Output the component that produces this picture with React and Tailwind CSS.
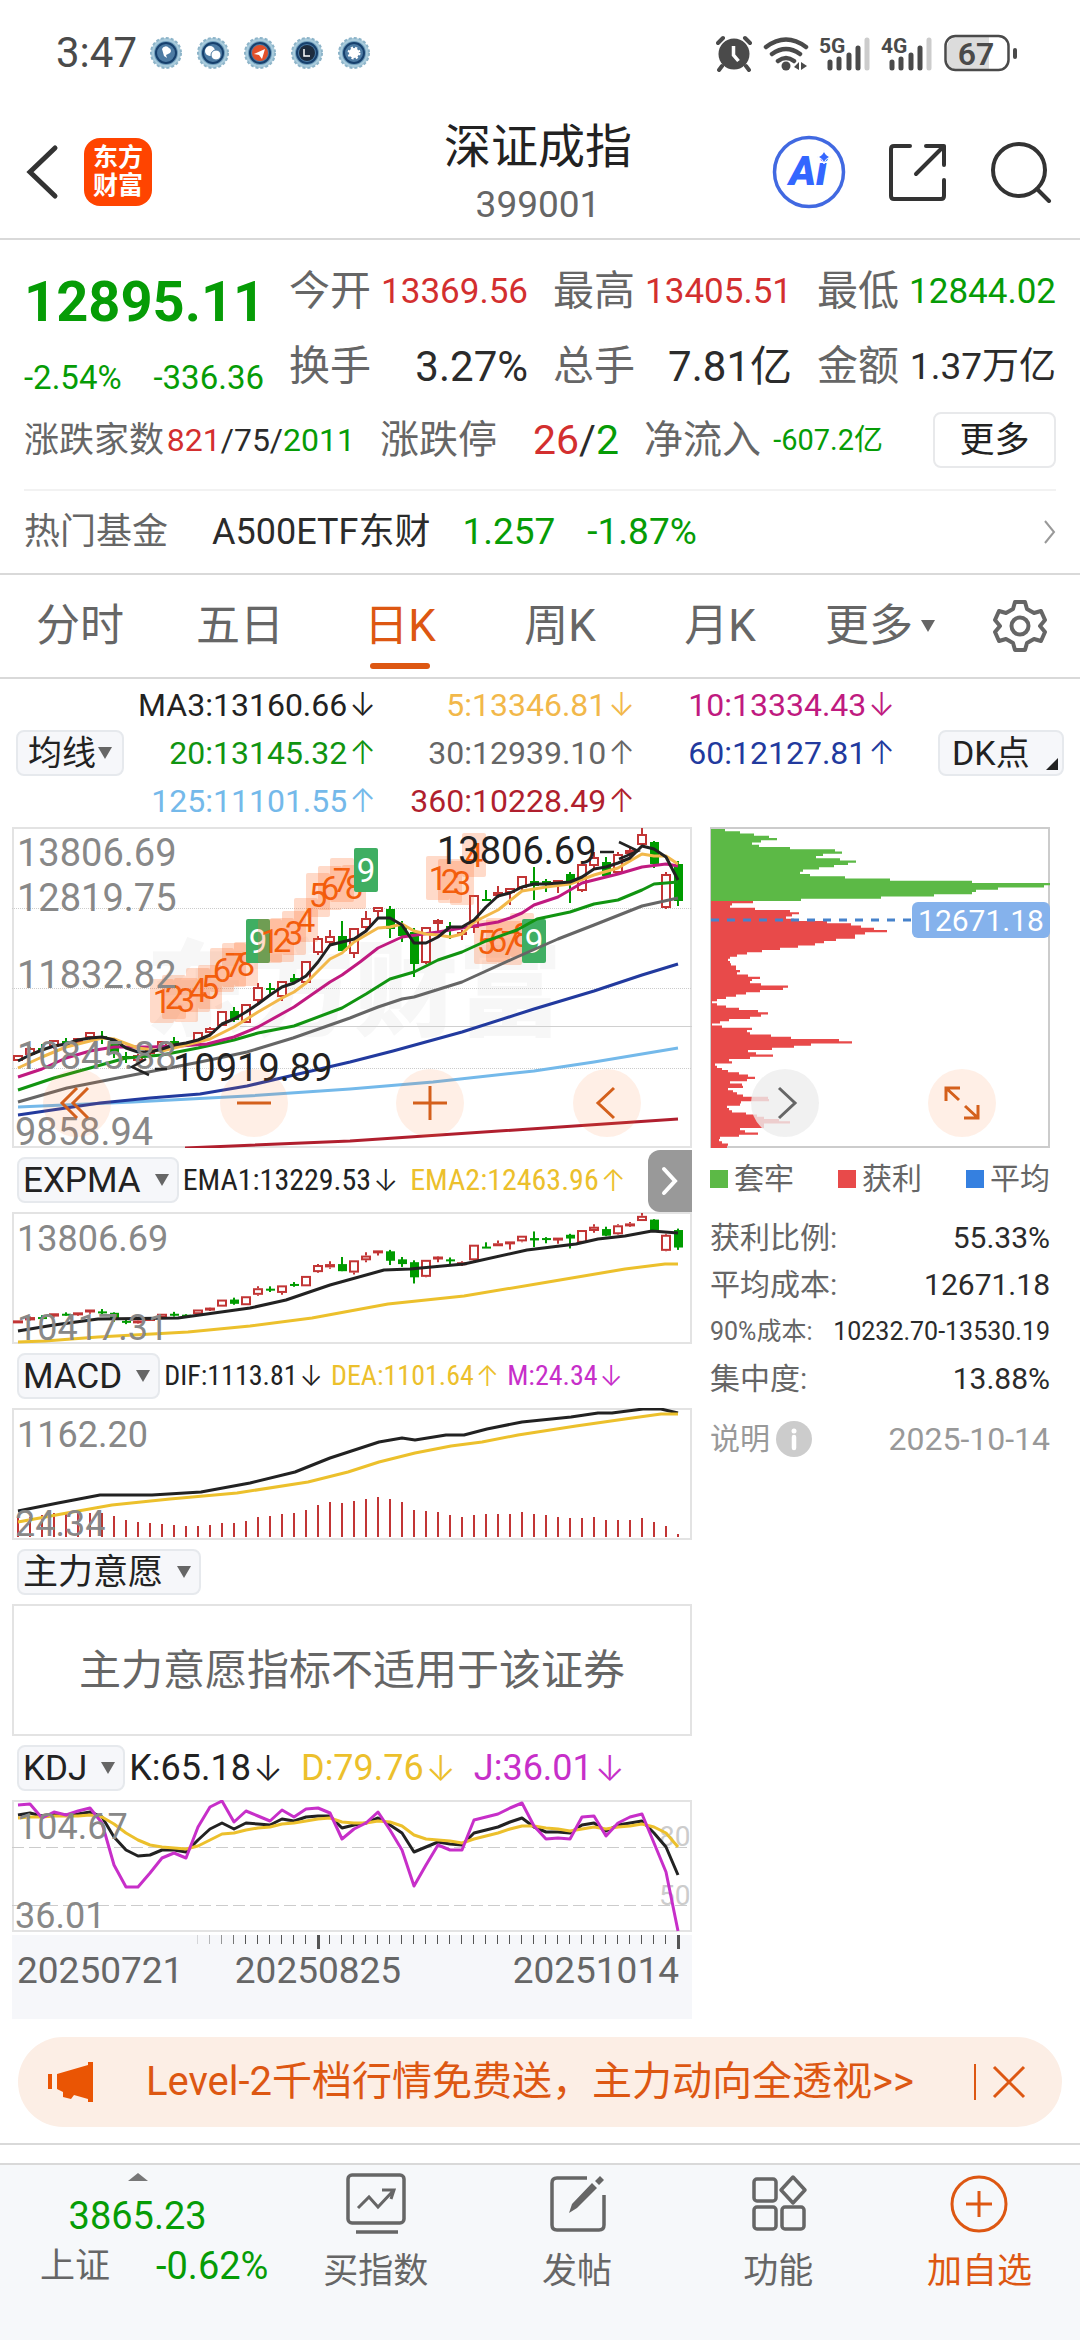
import React, { useState } from "react";

// [top, bottom, high, low, isUp] for each trading day
const candles = [
  [1055, 1061, 1055, 1061, 1], [1048, 1055, 1047, 1056, 1], [1048, 1050, 1044, 1053, 0], [1040, 1047, 1040, 1049, 1],
  [1041, 1043, 1038, 1045, 0], [1038, 1043, 1038, 1045, 1], [1032, 1038, 1032, 1041, 1], [1036, 1038, 1031, 1044, 0],
  [1039, 1053, 1038, 1058, 0], [1056, 1058, 1052, 1063, 0], [1055, 1061, 1054, 1062, 1], [1050, 1054, 1049, 1055, 1],
  [1041, 1050, 1041, 1051, 1], [1041, 1044, 1037, 1047, 0], [1043, 1045, 1042, 1046, 0], [1032, 1042, 1032, 1043, 1],
  [1028, 1033, 1027, 1035, 1], [1011, 1026, 1011, 1026, 1], [1011, 1020, 1007, 1022, 0], [1004, 1023, 1004, 1023, 1],
  [987, 1001, 983, 1003, 1], [988, 990, 983, 995, 0], [981, 997, 981, 1001, 1], [978, 982, 974, 984, 0],
  [961, 983, 961, 983, 1], [938, 953, 936, 955, 1], [936, 943, 930, 946, 1], [936, 951, 921, 951, 0],
  [928, 954, 928, 958, 1], [918, 928, 911, 932, 1], [907, 912, 907, 918, 1], [909, 929, 906, 938, 0],
  [926, 936, 921, 942, 0], [932, 964, 928, 977, 0], [927, 963, 927, 964, 1], [920, 924, 919, 932, 1],
  [926, 928, 922, 939, 0], [932, 935, 930, 940, 1], [895, 928, 895, 933, 1], [899, 900, 890, 901, 0],
  [892, 896, 886, 898, 1], [888, 893, 888, 905, 1], [876, 888, 876, 890, 1], [881, 886, 867, 900, 0],
  [881, 883, 879, 892, 0], [880, 883, 880, 893, 1], [874, 882, 872, 903, 0], [864, 891, 864, 892, 1],
  [857, 866, 852, 870, 1], [862, 876, 857, 877, 0], [854, 873, 852, 874, 1], [850, 854, 847, 857, 1],
  [834, 845, 828, 845, 1], [842, 864, 841, 868, 0], [874, 908, 872, 909, 1], [864, 901, 861, 906, 0],
];

const ma3 = [
  1061, 1055, 1050, 1046, 1044, 1040, 1038, 1037, 1040, 1048, 1052, 1052, 1049, 1045, 1043, 1040, 1035, 1024, 1019,
  1012, 1004, 995, 987, 983, 976, 962, 945, 942, 939, 931, 918, 918, 925, 943, 943, 937, 927, 927, 920, 907, 896, 893,
  887, 884, 884, 883, 882, 877, 869, 867, 863, 858, 846, 849, 857, 880,
];

const maLines = [
  ["#b01f2e", "185,1148 350,1141 678,1119"],
  ["#74b9ea", "18,1107 133,1102 247,1096 350,1089 433,1082 534,1071 594,1062 678,1048"],
  ["#223a9e", "18,1115 100,1103 150,1098 200,1094 247,1086 294,1075 350,1062 393,1051 462,1032 534,1009 594,991 642,975 678,964"],
  ["#666666", "18,1102 67,1088 133,1075 200,1062 247,1052 293,1038 350,1018 378,1007 402,999 414,997 462,982 517,957 558,939 594,925 642,906 678,898"],
  ["#119411", "18,1090 54,1078 90,1068 126,1058 162,1055 198,1048 234,1040 258,1033 294,1026 342,1008 366,994 390,979 414,972 438,960 462,952 486,941 517,930 537,919 570,912 594,904 618,900 642,890 654,884 678,882"],
  ["#c01a80", "18,1077 42,1069 66,1058 90,1051 114,1047 150,1047 180,1046 207,1044 234,1037 258,1027 294,1007 330,982 342,975 360,962 378,948 402,937 438,932 474,926 498,922 510,918 522,913 534,905 558,897 582,883 618,874 642,867 666,864 678,866"],
  ["#f2b84a", "18,1068 42,1057 66,1047 102,1038 114,1039 138,1048 162,1051 186,1045 210,1039 234,1027 258,1012 282,998 294,992 306,983 330,959 342,953 354,942 378,928 390,927 402,924 414,931 426,934 438,935 450,937 462,934 474,922 498,910 522,891 546,887 570,884 594,875 618,868 642,854 654,856 666,856 678,864"],
];

// nine-turn counters: [day index, digit, centre y]
const turns = [
  [12, 1, 1001], [13, 2, 997], [14, 3, 1000], [15, 4, 990], [16, 5, 987], [17, 6, 970], [18, 7, 965], [19, 8, 964],
  [20, 9, 941], [21, 1, 941], [22, 2, 940], [23, 3, 933], [24, 4, 920], [25, 5, 895], [26, 6, 888], [27, 7, 880],
  [28, 8, 887], [29, 9, 870], [35, 1, 878], [36, 2, 881], [37, 3, 883], [38, 4, 855], [39, 5, 942], [40, 6, 940],
  [41, 7, 943], [42, 8, 935], [43, 9, 941],
];

const trapped = [
  14, 29, 43, 58, 66, 50, 41, 48, 79, 124, 131, 112, 105, 129, 145, 137, 123, 108, 92, 89, 99, 134, 179, 261, 339, 333,
  287, 265, 261, 223, 170, 90,
];
const profit = [
  42, 21, 19, 44, 79, 88, 81, 75, 83, 116, 140, 150, 163, 176, 154, 144, 144, 125, 113, 104, 87, 69, 51, 36, 26, 19, 17,
  19, 20, 25, 25, 29, 26, 37, 49, 41, 39, 50, 77, 72, 49, 35, 25, 15, 6, 1, 6, 15, 28, 47, 57, 50, 39, 18, 9, 1, 11, 41,
  36, 39, 60, 80, 128, 141, 100, 83, 61, 37, 45, 62, 39, 18, 21, 4, 6, 11, 17, 28, 37, 44, 36, 19, 31, 32, 17, 22, 26,
  32, 57, 58, 30, 29, 16, 18, 21, 35, 46, 53, 68, 79, 53, 53, 29, 34, 47, 28, 9, 8, 11, 17, 16,
];

const macdBars = [
  19, 20, 22, 24, 24, 25, 24, 24, 21, 17, 15, 14, 13, 12, 11, 11, 12, 14, 14, 16, 20, 21, 23, 24, 27, 32, 35, 34, 36, 38,
  40, 38, 35, 27, 26, 25, 22, 20, 22, 23, 23, 23, 25, 23, 22, 20, 19, 19, 20, 17, 17, 17, 19, 15, 11, 3,
];

const kLine = [
  15, 13, 16, 14, 15, 14, 12, 17, 37, 50, 56, 55, 50, 50, 52, 40, 29, 23, 29, 23, 24, 25, 19, 21, 17, 16, 16, 28, 25, 23,
  18, 25, 33, 52, 47, 42, 44, 45, 33, 30, 27, 22, 18, 27, 32, 32, 33, 25, 23, 31, 25, 23, 21, 33, 47, 75,
];
const dLine = [
  18, 17, 17, 16, 16, 16, 15, 17, 24, 33, 40, 45, 47, 48, 49, 46, 40, 34, 33, 30, 28, 27, 24, 23, 21, 19, 18, 22, 23, 23,
  21, 22, 26, 35, 39, 40, 41, 43, 39, 36, 33, 29, 26, 26, 28, 29, 31, 29, 27, 29, 27, 26, 24, 27, 33, 47,
];
const jLine = [
  5, 4, 18, 12, 15, 11, 8, 23, 65, 87, 87, 73, 58, 53, 58, 27, 7, 1, 22, 11, 16, 21, 10, 17, 9, 8, 13, 39, 29, 23, 12,
  30, 50, 86, 65, 45, 50, 50, 20, 17, 14, 8, 3, 26, 39, 38, 39, 17, 16, 36, 23, 17, 14, 43, 72, 131,
];

const dayX = (i) => 18 + i * 12;
const toPoints = (ys) => ys.map((y, i) => `${dayX(i)},${y}`).join(" ");

const stepPath = (rows, left, top, height) => {
  const h = height / rows.length;
  const steps = rows.map((w, i) => `L${left + w} ${top + i * h}L${left + w} ${top + (i + 1) * h}`).join("");
  return `M${left} ${top}${steps}L${left} ${top + height}Z`;
};

const Line = ({ points, color }) => (
  <polyline points={points} fill="none" stroke={color} strokeWidth="3" strokeLinejoin="round" />
);

const Candles = ({ y = (v) => v }) =>
  candles.map(([top, bottom, high, low, up], i) => {
    const x = dayX(i);
    const h = Math.max(y(bottom) - y(top), 2);
    return up ? (
      <g key={i} stroke="#c23535" strokeWidth="2">
        <path d={`M${x} ${y(high)}V${y(top)}M${x} ${y(bottom)}V${y(low)}`} />
        <rect x={x - 4} y={y(top) + 1} width="8" height={Math.max(h - 2, 1)} fill="#fff" />
      </g>
    ) : (
      <g key={i} fill="#009b00">
        <rect x={x - 1} y={y(high)} width="2" height={y(low) - y(high)} />
        <rect x={x - 4} y={y(top)} width="9" height={h} />
      </g>
    );
  });

const Caret = () => (
  <svg viewBox="0 0 14 12" className="w-[14px] h-3 shrink-0">
    <path d="M0 0h14L7 12z" fill="#666" />
  </svg>
);

const Arrow = ({ up }) => <span className="font-['Inter',sans-serif] font-light">{up ? "↑" : "↓"}</span>;

const StatusBar = () => (
  <div className="flex items-center justify-between h-[106px] pl-14 pr-[62px] text-[#4a4a4a]">
    <div className="flex items-center gap-3">
      <span className="text-[42px] leading-none">3:47</span>
      <svg viewBox="0 0 222 34" className="w-[222px] h-[34px]">
        {[17, 64, 111, 158, 205].map((cx, i) => (
          <g key={cx}>
            <circle cx={cx} cy="17" r="15" fill="#a9cbdc" stroke="#8db4c9" strokeWidth="2" strokeDasharray="3 2" />
            <circle cx={cx} cy="17" r="12" fill="#6f9dbb" />
            <circle cx={cx} cy="17" r="10" fill="#4d7ba3" stroke="#17406d" strokeWidth="2" />
            {i === 0 && <path d="M13 13a4 4 0 0 1 7-1 3 3 0 0 1 1 5l-4 2 1 3-3-2z" fill="#fff" />}
            {i === 1 && (
              <g fill="#fff">
                <circle cx="61" cy="15" r="5" />
                <circle cx="67" cy="19" r="5" stroke="#4d7ba3" />
              </g>
            )}
            {i === 2 && (
              <g>
                <circle cx="111" cy="17" r="8" fill="#e2502a" />
                <path d="M105 18l11-5-3 10-3-4z" fill="#fff" />
              </g>
            )}
            {i === 3 && (
              <g>
                <circle cx="158" cy="17" r="8" fill="#1e2c3e" />
                <path d="M155 13v7h6" fill="none" stroke="#fff" strokeWidth="1.5" />
              </g>
            )}
            {i === 4 && <circle cx="205" cy="17" r="5" fill="#fff" stroke="#fff" strokeWidth="3" strokeDasharray="2 2" />}
          </g>
        ))}
      </svg>
    </div>
    <svg viewBox="717 34 302 38" className="w-[302px] h-[38px]" fill="#4a4a4a">
      <circle cx="735" cy="54" r="15.5" />
      <path d="M719 43l5-5M751 43l-5-5M723 66l-3 4M747 66l3 4" stroke="#4a4a4a" strokeWidth="4" strokeLinecap="round" />
      <path d="M734.500 46v9l5 6" fill="none" stroke="#fff" strokeWidth="3.500" />
      <g fill="none" stroke="#4a4a4a" strokeWidth="4.500" strokeLinecap="round">
        <path d="M767 47q20-15 40 0M773 54q14-10 28 0M779 61q8-6 16 0" />
      </g>
      <circle cx="787" cy="66" r="4.500" />
      <path d="M795 67l5-5v8zM802 62l6 4-6 4z" />
      {[0, 62].map((dx) => (
        <g key={dx} strokeWidth="5" strokeLinecap="round" stroke="#4a4a4a">
          <path d={`M${831 + dx} 62v6M${840 + dx} 59v9M${850 + dx} 55v13M${859 + dx} 48v20`} />
          <path d={`M${868 + dx} 40v28`} stroke="#ccc" />
        </g>
      ))}
      <text x="820" y="53" fontSize="21" fontWeight="700">5G</text>
      <text x="882" y="53" fontSize="21" fontWeight="700">4G</text>
      <path d="M958 37h32v33h-32a10 10 0 0 1-10-10V47a10 10 0 0 1 10-10z" fill="#dcdcdc" />
      <rect x="946.500" y="36" width="63" height="34" rx="10" fill="none" stroke="#4a4a4a" strokeWidth="2.500" />
      <rect x="1014" y="48" width="4" height="11" rx="2" />
      <text x="977" y="65" fontSize="32" fontWeight="600" textAnchor="middle">67</text>
    </svg>
  </div>
);

const Header = () => (
  <header className="flex items-center h-[134px] border-b-2 border-[#d9d9d9] pl-6 pr-7">
    <div className="flex-1 flex items-center gap-6">
      <button aria-label="返回">
        <svg viewBox="0 0 36 56" className="w-9 h-14" fill="none" stroke="#333" strokeWidth="5" strokeLinecap="round">
          <path d="M31 4L6 28l25 24" />
        </svg>
      </button>
      <a
        href="#home"
        className="w-[68px] h-[68px] rounded-2xl bg-[#ff4400] text-white text-[25px] leading-7 font-bold flex flex-col items-center justify-center"
      >
        <span>东方</span>
        <span>财富</span>
      </a>
    </div>
    <div className="text-center pt-2">
      <h1 className="text-[47px] leading-[58px] text-[#222]">深证成指</h1>
      <p className="text-[37px] leading-[58px] text-[#666]">399001</p>
    </div>
    <div className="flex-1 flex items-center justify-end gap-[42px]">
      <button aria-label="Ai">
        <svg viewBox="0 0 74 74" className="w-[74px] h-[74px]">
          <circle cx="37" cy="37" r="34.500" fill="none" stroke="#4169e1" strokeWidth="3.500" />
          <g fill="#3366ff">
            <text x="36" y="50" fontSize="41" fontWeight="900" textAnchor="middle" fontStyle="italic">Ai</text>
            <path d="M52 15q1 6 7 7-6 1-7 7-1-6-7-7 6-1 7-7z" stroke="#fff" strokeWidth="1" />
          </g>
        </svg>
      </button>
      <button aria-label="分享">
        <svg viewBox="0 0 60 60" className="w-[60px] h-[60px]" fill="none" stroke="#333" strokeWidth="4" strokeLinecap="round" strokeLinejoin="round">
          <path d="M22 4H6q-3 0-3 3v47q0 3 3 3h47q3 0 3-3V38" />
          <path d="M38 4h18v19M56 4L28 32" />
        </svg>
      </button>
      <button aria-label="搜索">
        <svg viewBox="0 0 62 62" className="w-[62px] h-[62px]" fill="none" stroke="#333" strokeWidth="4" strokeLinecap="round">
          <circle cx="29" cy="29" r="26" />
          <path d="M47 48l12 12" />
        </svg>
      </button>
    </div>
  </header>
);

const Stat = ({ label, children }) => (
  <div className="flex items-center justify-between h-[75px]">
    <span className="text-[41px] text-[#666]">{label}</span>
    {children}
  </div>
);

const QuotePanel = () => (
  <section className="px-6 pt-3 border-b-2 border-[#d9d9d9] whitespace-nowrap leading-none">
    <div className="flex gap-[25px]">
      <div className="flex-[240] min-w-0 text-[#069c06]">
        <div className="h-[100px] flex items-center text-[56px] font-bold">12895.11</div>
        <div className="flex justify-between text-[33px] h-[50px] items-center">
          <span>-2.54%</span>
          <span>-336.36</span>
        </div>
      </div>
      <div className="flex-[767] min-w-0 grid grid-cols-3 gap-x-[25px] pt-0.5 text-[#2b2b2b]">
        <Stat label="今开"><span className="text-[35px] text-[#d32f2f]">13369.56</span></Stat>
        <Stat label="最高"><span className="text-[35px] text-[#d32f2f]">13405.51</span></Stat>
        <Stat label="最低"><span className="text-[35px] text-[#069c06]">12844.02</span></Stat>
        <Stat label="换手"><span className="text-[42px]">3.27%</span></Stat>
        <Stat label="总手"><span className="text-[42px]">7.81亿</span></Stat>
        <Stat label="金额"><span className="text-[37px]">1.37万亿</span></Stat>
      </div>
    </div>
    <div className="flex items-center gap-[25px] h-[72px]">
      <div className="flex-[331] min-w-0 flex items-center justify-between">
        <span className="text-[35px] text-[#666]">涨跌家数</span>
        <span className="text-[32px]">
          <span className="text-[#d32f2f]">821</span>/75/<span className="text-[#069c06]">2011</span>
        </span>
      </div>
      <div className="flex-[239] min-w-0 flex items-center justify-between">
        <span className="text-[39px] text-[#666]">涨跌停</span>
        <span className="text-[41px]">
          <span className="text-[#d32f2f]">26</span>/<span className="text-[#069c06]">2</span>
        </span>
      </div>
      <div className="flex-[239] min-w-0 flex items-center justify-between">
        <span className="text-[39px] text-[#666]">净流入</span>
        <span className="text-[29px] text-[#069c06]">-607.2亿</span>
      </div>
      <button className="ml-[25px] w-[123px] h-14 border-2 border-[#e8e9eb] rounded-lg text-[35px] text-[#222]">更多</button>
    </div>
    <a href="#fund" className="mt-[13px] flex items-center h-[84px] border-t-2 border-[#f2f2f2] text-4xl text-[#069c06]">
      <span className="text-[#666] mr-11">热门基金</span>
      <span className="text-[#2b2b2b] mr-8">A500ETF东财</span>
      <span className="mr-8 text-[37px]">1.257</span>
      <span className="text-[37px]">-1.87%</span>
      <svg viewBox="0 0 12 24" className="w-3 h-6 ml-auto" fill="none" stroke="#999" strokeWidth="2">
        <path d="M1 1l9 11-9 11" />
      </svg>
    </a>
  </section>
);

const tabs = ["分时", "五日", "日K", "周K", "月K", "更多"];

const Tabs = () => {
  const [active, setActive] = useState("日K");

  return (
    <nav className="flex items-center h-[104px] border-b-2 border-[#d9d9d9]">
      {tabs.map((tab) => (
        <button
          key={tab}
          onClick={() => setActive(tab)}
          className={
            "flex-[4] relative h-full flex items-center justify-center gap-2 text-[44px] " +
            (active === tab ? "text-[#dd5712]" : "text-[#666]")
          }
        >
          {tab}
          {tab === "更多" && <Caret />}
          {active === tab && <span className="absolute bottom-2 w-[60px] h-1.5 rounded bg-[#dd5712]"></span>}
        </button>
      ))}
      <button aria-label="设置" className="flex-[3] flex justify-center">
        <svg viewBox="0 0 54 54" className="w-[54px] h-[54px]" fill="none" stroke="#666" strokeWidth="4" strokeLinejoin="round">
          <path d="M22 3h10l2 7 7 4 7-2 4 9-5 6 5 6-4 9-7-2-7 4-2 7H22l-2-7-7-4-7 2-4-9 5-6-5-6 4-9 7 2 7-4z" />
          <circle cx="27" cy="27" r="8.500" />
        </svg>
      </button>
    </nav>
  );
};

const averages = [
  ["MA3:13160.66", false, "text-[#222]"],
  ["5:13346.81", false, "text-[#f2b84a]"],
  ["10:13334.43", false, "text-[#c01a80]"],
  ["20:13145.32", true, "text-[#119411]"],
  ["30:12939.10", true, "text-[#666]"],
  ["60:12127.81", true, "text-[#223a9e]"],
  ["125:11101.55", true, "text-[#74b9ea]"],
  ["360:10228.49", true, "text-[#b01f2e]"],
];

const Averages = () => (
  <section className="flex items-center px-4 py-0.5 whitespace-nowrap">
    <button className="w-[108px] h-[46px] flex items-center justify-center gap-0.5 rounded-lg border-2 border-[#e6e9ed] bg-[#f6f7fa] text-[34px] text-[#222]">
      均线
      <Caret />
    </button>
    <div className="flex-1 grid grid-cols-[250fr_257fr_258fr] pr-[43px]">
      {averages.map(([text, up, color]) => (
        <span key={text} className={"h-12 flex items-center justify-end gap-0.5 text-[32px] leading-none " + color}>
          {text}
          <Arrow up={up} />
        </span>
      ))}
    </div>
    <button className="w-[126px] h-[46px] relative flex items-center pl-3 rounded-lg border-2 border-[#e6e9ed] bg-[#f6f7fa] text-[34px] text-[#222]">
      DK点
      <svg viewBox="0 0 12 12" className="absolute right-1 bottom-1 w-3 h-3">
        <path d="M12 0v12H0z" fill="#222" />
      </svg>
    </button>
  </section>
);

const RoundButton = ({ label, gray, children }) => (
  <button
    aria-label={label}
    className={"w-[68px] h-[68px] rounded-full " + (gray ? "bg-[#eeeeee]/80" : "bg-[#ff7a33]/12")}
  >
    <svg
      viewBox="0 0 68 68"
      fill="none"
      stroke={gray ? "#666" : "#d4601c"}
      strokeWidth="3"
      className="w-[68px] h-[68px]"
    >
      {children}
    </svg>
  </button>
);

const MainChart = () => (
  <div className="relative">
    <svg viewBox="12 827 680 321" className="block w-full">
      <text x="146" y="1028" fontSize="104" fontWeight="900" fill="#f7f7f7">东方财富</text>
      <rect x="13" y="828" width="678" height="319" fill="none" stroke="#e3e3e3" strokeWidth="2" />
      <path d="M12 908.500H692M12 988.500H692M12 1068.500H692" stroke="#ccc" strokeDasharray="1 1" />
      <path d="M240 1026.500H692" stroke="#d0d0d0" />
      <Candles />
      {turns.map(([i, n, y]) => (
        <g key={i}>
          <rect x={dayX(i) - 12} y={y - 22} width="24" height="44" rx="2" fill={n === 9 ? "#3fae62" : "#ff6a26"} opacity={n === 9 ? 1 : 0.25} />
          <text x={dayX(i)} y={y + 12} fontSize="33" textAnchor="middle" fill={n === 9 ? "#fff" : "#f25c0a"}>{n}</text>
        </g>
      ))}
      {maLines.map(([color, points]) => (
        <Line key={color} points={points} color={color} />
      ))}
      <Line points={toPoints(ma3)} color="#222" />
      <g fontSize="38" fill="#888">
        <text x="17" y="866">13806.69</text>
        <text x="17" y="911">12819.75</text>
        <text x="17" y="988">11832.82</text>
        <text x="17" y="1069">10845.88</text>
        <text x="15" y="1145">9858.94</text>
      </g>
      <g fontSize="38" fill="#222">
        <text x="437" y="864">13806.69</text>
        <text x="173" y="1081">10919.89</text>
      </g>
      <path d="M600 852h14M619 842l19 9-19 8M146 1059l-14 8 17 8M155 1069h12" fill="none" stroke="#222" strokeWidth="2.500" />
    </svg>
    <div className="absolute bottom-[11px] inset-x-0 pl-[31px] pr-[51px] flex justify-between">
      <RoundButton label="最早">
        <path d="M34 19L19 34l15 15M45 19L30 34l15 15" />
      </RoundButton>
      <RoundButton label="缩小">
        <path d="M17 34h34" />
      </RoundButton>
      <RoundButton label="放大">
        <path d="M17 34h34M34 17v34" />
      </RoundButton>
      <RoundButton label="左移">
        <path d="M41 19L25 34l16 15" />
      </RoundButton>
    </div>
  </div>
);

const IndicatorRow = ({ name, values, className = "", children }) => (
  <div className="relative flex items-center h-16 pl-[5px] gap-1 whitespace-nowrap leading-none">
    <button className="h-[46px] pl-1 pr-2 flex items-center gap-3.5 rounded-lg border-2 border-[#e6e9ed] bg-[#f6f7fa] text-[35px] text-[#222]">
      {name}
      <Caret />
    </button>
    <div className={"flex " + className}>
      {values.map(([text, up, color]) => (
        <span key={text} className={"flex items-center gap-0.5 " + color}>
          {text}
          <Arrow up={up} />
        </span>
      ))}
    </div>
    {children}
  </div>
);

const narrow = "font-['Roboto_Condensed','Liberation_Sans_Narrow','Roboto',sans-serif]";

const Indicators = () => (
  <>
    <IndicatorRow
      name="EXPMA"
      className={narrow + " text-[30px] gap-3"}
      values={[
        ["EMA1:13229.53", false, "text-[#222]"],
        ["EMA2:12463.96", true, "text-[#ecc02c]"],
      ]}
    >
      <button aria-label="展开" className="absolute right-0 top-0.5 w-11 h-[62px] rounded-l-xl bg-[#999] flex items-center justify-center">
        <svg viewBox="0 0 18 30" className="w-[18px] h-[30px]" fill="none" stroke="#fff" strokeWidth="4" strokeLinecap="round">
          <path d="M3 3l11 12L3 27" />
        </svg>
      </button>
    </IndicatorRow>
    <svg viewBox="12 1212 680 132" className="block w-full">
      <rect x="13" y="1213" width="678" height="130" fill="none" stroke="#e3e3e3" strokeWidth="2" />
      <Candles y={(v) => 1213 + (v - 828) * 0.473} />
      <Line
        color="#222"
        points="18,1331 54,1325 98,1319 178,1318 214,1313 250,1308 286,1300 330,1285 384,1270 410,1269 464,1264 527,1250 576,1244 598,1239 625,1236 652,1231 678,1233"
      />
      <Line
        color="#ecc02c"
        points="18,1342 45,1341 98,1337 188,1332 250,1326 312,1318 388,1304 464,1296 554,1281 625,1269 665,1264 678,1264"
      />
      <g fontSize="36" fill="#888">
        <text x="17" y="1251">13806.69</text>
        <text x="17" y="1340">10417.31</text>
      </g>
    </svg>

    <IndicatorRow
      name="MACD"
      className={narrow + " text-[28px] gap-2"}
      values={[
        ["DIF:1113.81", false, "text-[#222]"],
        ["DEA:1101.64", true, "text-[#ecc02c]"],
        ["M:24.34", false, "text-[#c72fc9]"],
      ]}
    />
    <svg viewBox="12 1408 680 132" className="block w-full">
      <rect x="13" y="1409" width="678" height="130" fill="none" stroke="#e3e3e3" strokeWidth="2" />
      {macdBars.map((h, i) => (
        <rect key={i} x={dayX(i) - 1} y={1537 - h} width="2" height={h} fill="#c23535" />
      ))}
      <Line
        color="#222"
        points="18,1511 58,1503 100,1495 152,1495 201,1492 250,1483 295,1472 330,1458 379,1442 402,1438 415,1440 446,1435 464,1435 487,1429 522,1422 571,1417 598,1413 612,1413 643,1409 661,1409 678,1413"
      />
      <Line
        color="#ecc02c"
        points="18,1522 67,1513 112,1505 170,1499 237,1493 308,1482 348,1472 379,1462 415,1453 451,1446 482,1442 518,1435 576,1426 625,1419 661,1414 678,1414"
      />
      <g fontSize="36" fill="#888">
        <text x="17" y="1447">1162.20</text>
        <text x="15" y="1536">24.34</text>
      </g>
    </svg>

    <IndicatorRow name="主力意愿" values={[]} />
    <div className="h-[132px] border-2 border-[#e3e3e3] flex items-center justify-center text-[42px] text-[#666]">
      主力意愿指标不适用于该证券
    </div>

    <IndicatorRow
      name="KDJ"
      className="text-4xl gap-[18px]"
      values={[
        ["K:65.18", false, "text-[#222]"],
        ["D:79.76", false, "text-[#ecc02c]"],
        ["J:36.01", false, "text-[#c72fc9]"],
      ]}
    />
    <svg viewBox="12 0 680 132" className="block w-full">
      <rect x="13" y="1" width="678" height="130" fill="none" stroke="#e3e3e3" strokeWidth="2" />
      <path d="M12 47.500H692M12 105.500H692" stroke="#ccc" strokeDasharray="12 5" />
      <g fontSize="28" fill="#ccc">
        <text x="659" y="46">80</text>
        <text x="659" y="105">50</text>
      </g>
      <Line points={toPoints(kLine)} color="#222" />
      <Line points={toPoints(dLine)} color="#ecc02c" />
      <Line points={toPoints(jLine)} color="#c72fc9" />
      <g fontSize="36" fill="#888">
        <text x="17" y="39">104.67</text>
        <text x="15" y="128">36.01</text>
      </g>
    </svg>
    <svg viewBox="12 0 680 84" className="block w-full mt-[3px] bg-[#f6f7fa]">
      {candles.slice(15).map((_, n) => {
        const major = n === 10 || n === 40;
        return (
          <rect
            key={n}
            x={dayX(n + 15) - 1}
            y="0"
            width={major ? 3 : 1}
            height={major ? 14 : 9}
            fill="#555"
            opacity={Math.min(1, 0.2 + n * 0.2)}
          />
        );
      })}
      <g fontSize="37" fill="#666">
        <text x="17" y="48">20250721</text>
        <text x="318" y="48" textAnchor="middle">20250825</text>
        <text x="679" y="48" textAnchor="end">20251014</text>
      </g>
    </svg>
  </>
);

const Fact = ({ label, value, small }) => (
  <div className={"flex items-center justify-between h-[47px] " + (small ? "text-[25px]" : "text-[30px]")}>
    <dt className="text-[#666]">{label}:</dt>
    <dd className="text-[#2b2b2b]">{value}</dd>
  </div>
);

const ChipPanel = () => (
  <aside className="flex-[340] min-w-0 whitespace-nowrap leading-none">
    <div className="relative">
      <svg viewBox="710 827 340 321" className="block w-full">
        <rect x="711" y="828" width="338" height="319" fill="none" stroke="#ccc" strokeWidth="2" />
        <path d={stepPath(trapped, 711, 829, 72)} fill="#5cb946" />
        <path d={stepPath(profit, 711, 901, 247)} fill="#e84a4a" />
        <path d="M711 920H912" stroke="#4682cb" strokeWidth="3" strokeDasharray="8 8" />
        <rect x="912" y="902" width="138" height="36" rx="6" fill="#85b2ec" />
        <text x="981" y="931" fontSize="30" fill="#fff" textAnchor="middle">12671.18</text>
      </svg>
      <div className="absolute bottom-[11px] inset-x-0 pl-[41px] pr-[54px] flex justify-between">
        <RoundButton label="右移" gray>
          <path d="M28 19l16 15-16 15" />
        </RoundButton>
        <RoundButton label="全屏">
          <path d="M18 32V19h14M18 19l13 12M50 36v13H36M50 49L37 37" />
        </RoundButton>
      </div>
    </div>
    <div className="flex justify-between h-[66px] pb-1 items-center text-[30px] text-[#666]">
      <span className="flex items-center gap-1.5"><i className="w-[18px] h-[18px] bg-[#5cb946]"></i>套牢</span>
      <span className="flex items-center gap-1.5"><i className="w-[18px] h-[18px] bg-[#e84a4a]"></i>获利</span>
      <span className="flex items-center gap-1.5"><i className="w-[18px] h-[18px] bg-[#3580e0]"></i>平均</span>
    </div>
    <dl>
      <Fact label="获利比例" value="55.33%" />
      <Fact label="平均成本" value="12671.18" />
      <Fact label="90%成本" value="10232.70-13530.19" small />
      <Fact label="集中度" value="13.88%" />
    </dl>
    <div className="mt-3 flex items-center justify-between h-[50px] text-[30px] text-[#999]">
      <span className="flex items-center gap-1.5">
        说明
        <svg viewBox="0 0 36 36" className="w-9 h-9">
          <circle cx="18" cy="18" r="18" fill="#ccc" />
          <circle cx="18" cy="10" r="2.500" fill="#fff" />
          <path d="M18 16v11" stroke="#fff" strokeWidth="4.500" strokeLinecap="round" />
        </svg>
      </span>
      <span className="text-[32px]">2025-10-14</span>
    </div>
  </aside>
);

const Banner = () => (
  <div className="mt-[18px] mx-[18px] h-[90px] rounded-[45px] bg-[#fceee5] flex items-center pl-[30px] pr-9 text-[#dd5712] whitespace-nowrap">
    <svg viewBox="0 0 46 40" className="w-[46px] h-10" fill="#ea5504">
      <path d="M0 12h4v15H0zM9 12L40 3V0h5v40h-5v-3l-14-4-3 4-8-2v-5l-6-3z" />
    </svg>
    <a href="#level2" className="flex-1 ml-[52px] text-[40px]">Level-2千档行情免费送，主力动向全透视&gt;&gt;</a>
    <button aria-label="关闭" className="border-l-2 border-[#dd5712] pl-4 h-9">
      <svg viewBox="0 0 34 34" className="w-[34px] h-[34px]" fill="none" stroke="#dd5712" strokeWidth="3">
        <path d="M2 2l30 30M32 2L2 32" />
      </svg>
    </button>
  </div>
);

const NavItem = ({ label, active, children }) => (
  <button className={"flex-[201] flex flex-col items-center " + (active ? "text-[#dd5712]" : "text-[#666]")}>
    <svg viewBox="0 0 64 64" className="w-16 h-16 mt-1.5" fill="none" stroke="currentColor" strokeWidth="3.500">
      {children}
    </svg>
    <span className="mt-3 text-[35px] leading-[50px]">{label}</span>
  </button>
);

const BottomBar = () => (
  <footer className="flex-1 flex min-h-[174px] border-t-2 border-[#d9d9d9] bg-[#f6f8fa] whitespace-nowrap">
    <button className="flex-[275] flex flex-col items-center text-[#069c06] leading-none">
      <svg viewBox="0 0 20 8" className="w-5 h-2 mt-2">
        <path d="M10 0l10 8H0z" fill="#777" />
      </svg>
      <span className="mt-4 text-[38px]">3865.23</span>
      <span className="mt-3 w-full pl-10 flex items-center gap-[46px] text-[38px]">
        <span className="text-[35px] text-[#666]">上证</span>
        -0.62%
      </span>
    </button>
    <NavItem label="买指数">
      <rect x="4" y="4" width="56" height="48" rx="4" />
      <path d="M12 61h42" />
      <path d="M14 37l11-11 9 10 15-16M38 19h12l-3 9" strokeWidth="3" />
    </NavItem>
    <NavItem label="发帖">
      <path d="M42 7H12q-5 0-5 5v42q0 5 5 5h42q5 0 5-5V24" />
      <path d="M24 42l3-9 20-21 5 5-20 20zM50 10l5-5 4 4-5 5z" fill="currentColor" stroke="none" />
    </NavItem>
    <NavItem label="功能">
      <rect x="8" y="8" width="22" height="22" rx="3" />
      <rect x="8" y="36" width="22" height="22" rx="3" />
      <rect x="36" y="36" width="22" height="22" rx="3" />
      <path d="M47 6l12 13-12 13-12-13z" strokeLinejoin="round" />
    </NavItem>
    <NavItem label="加自选" active>
      <circle cx="32" cy="33" r="27" strokeWidth="3" />
      <path d="M19 33h26M32 20v26" strokeWidth="3" />
    </NavItem>
  </footer>
);

const App = () => {
  return (
    <div className="min-h-screen flex flex-col bg-white text-[#2b2b2b] font-['Roboto','Noto_Sans_CJK_SC',sans-serif]">
      <StatusBar />
      <Header />
      <QuotePanel />
      <Tabs />
      <Averages />
      <main className="flex gap-[18px] pl-3 pr-[30px]">
        <div className="flex-[680] min-w-0">
          <MainChart />
          <Indicators />
        </div>
        <ChipPanel />
      </main>
      <Banner />
      <div className="mt-4 h-5 border-t-2 border-[#d9d9d9]"></div>
      <BottomBar />
    </div>
  );
};

export default App;
